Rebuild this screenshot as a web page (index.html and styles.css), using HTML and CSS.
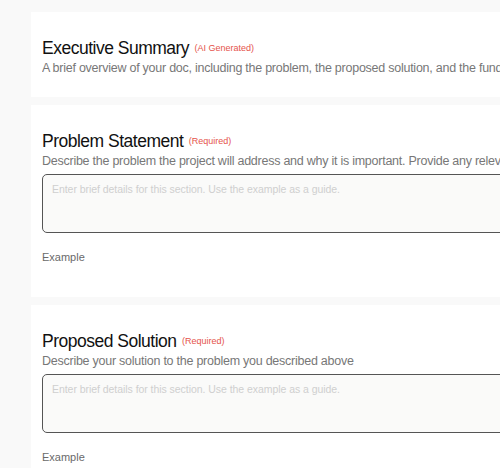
FILE: index.html
```html
<!DOCTYPE html>
<html>
<head>
<meta charset="utf-8">
<link rel="stylesheet" href="styles.css">
</head>
<body>
<main class="page">
  <section class="card card-summary">
    <h2 class="title">Executive Summary <span class="tag">(AI Generated)</span></h2>
    <p class="desc">A brief overview of your doc, including the problem, the proposed solution, and the funding required.</p>
  </section>
  <section class="card">
    <h2 class="title">Problem Statement <span class="tag">(Required)</span></h2>
    <p class="desc">Describe the problem the project will address and why it is important. Provide any relevant context.</p>
    <textarea class="field" placeholder="Enter brief details for this section. Use the example as a guide."></textarea>
    <div class="example">Example</div>
  </section>
  <section class="card">
    <h2 class="title">Proposed Solution <span class="tag">(Required)</span></h2>
    <p class="desc">Describe your solution to the problem you described above</p>
    <textarea class="field" placeholder="Enter brief details for this section. Use the example as a guide."></textarea>
    <div class="example">Example</div>
  </section>
</main>
</body>
</html>
```

FILE: styles.css
```css
html, body {
  margin: 0;
  padding: 0;
  background: #f9f9f9;
  overflow: hidden;
}
body {
  font-family: "Liberation Sans", Arial, sans-serif;
  width: 500px;
  height: 468px;
}
.page {
  display: flex;
  flex-direction: column;
  gap: 8px;
  padding: 12px 0 0 31px;
  width: 469px;
}
.card {
  background: #ffffff;
  padding: 25px 0 31px 11px;
  overflow: hidden;
}
.card-summary {
  padding-bottom: 20px;
}
.title {
  margin: 0;
  font-size: 17.5px;
  font-weight: 400;
  line-height: 22px;
  color: #111;
  letter-spacing: -0.5px;
  white-space: nowrap;
}
.tag {
  font-size: 9px;
  color: #e5534b;
  margin-left: 1px;
  letter-spacing: 0;
  vertical-align: 3px;
}
.desc {
  margin: 0;
  font-size: 12.5px;
  line-height: 18px;
  color: #777;
  letter-spacing: -0.25px;
  white-space: nowrap;
  overflow: hidden;
}
.field {
  display: block;
  box-sizing: border-box;
  margin-top: 4px;
  width: 520px;
  height: 59px;
  border: 1.5px solid #555;
  border-radius: 5px;
  background: #fafaf9;
  padding: 8px 9px;
  font-family: inherit;
  font-size: 10.5px;
  letter-spacing: -0.05px;
  resize: none;
}
.field::placeholder {
  color: #cfcfcf;
}
.example {
  margin-top: 15px;
  font-size: 11px;
  line-height: 18px;
  color: #6a6a6a;
}
```
